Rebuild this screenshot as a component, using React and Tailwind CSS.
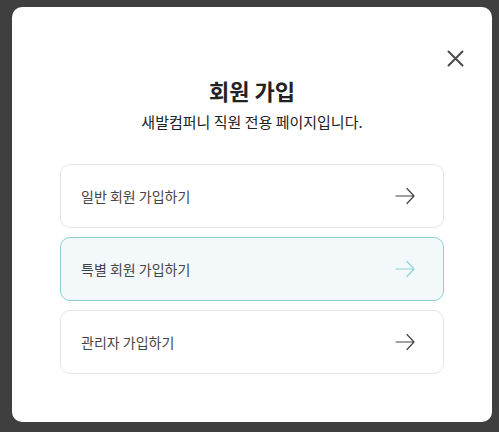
import React from "react";

const Arrow = ({ className }) => (
  <svg width="20" height="18" viewBox="0 0 20 18" fill="none" className={className}>
    <path d="M1 9h18M12 1.5l7 7.5-7 7.5" stroke="currentColor" strokeWidth="1.2" strokeLinecap="round" strokeLinejoin="round" />
  </svg>
);

const options = [
  { label: "일반 회원 가입하기", active: false },
  { label: "특별 회원 가입하기", active: true },
  { label: "관리자 가입하기", active: false },
];

export default function App() {
  return (
    <div
      className="w-[499px] h-[432px] bg-[#3f3f3f] flex pt-[7px] pl-[12px]"
      style={{ fontFamily: '"Noto Sans CJK KR", "Noto Sans", sans-serif' }}
    >
      <div className="relative w-[480px] h-[415px] bg-white rounded-[10px] px-12 pt-[68px] pb-12 flex flex-col">
        <button className="absolute top-[39px] right-[25px] w-[24px] h-[24px] flex items-center justify-center text-[#4a4a4a]">
          <svg width="17" height="17" viewBox="0 0 17 17" fill="none">
            <path d="M1.5 1.5l14 14M15.5 1.5l-14 14" stroke="currentColor" strokeWidth="2" strokeLinecap="round" />
          </svg>
        </button>
        <h2 className="text-[22px] leading-[30px] font-bold text-center text-[#222]">회원 가입</h2>
        <p className="mt-[6px] text-[15px] leading-[22px] text-center text-[#222]">
          새발컴퍼니 직원 전용 페이지입니다.
        </p>
        <div className="mt-[31px] flex flex-col gap-[9px]">
          {options.map((o) => (
            <button
              key={o.label}
              className={
                o.active
                  ? "h-[64px] rounded-[10px] border border-[#8dd0d2] bg-[#f3f9fb] flex items-center justify-between pl-5 pr-[28px] text-left"
                  : "h-[64px] rounded-[10px] border border-[#e6e6e6] bg-white flex items-center justify-between pl-5 pr-[28px] text-left"
              }
            >
              <span className="text-[14px] text-[#444]">{o.label}</span>
              <Arrow className={o.active ? "text-[#8dd3d3]" : "text-[#444]"} />
            </button>
          ))}
        </div>
      </div>
    </div>
  );
}
